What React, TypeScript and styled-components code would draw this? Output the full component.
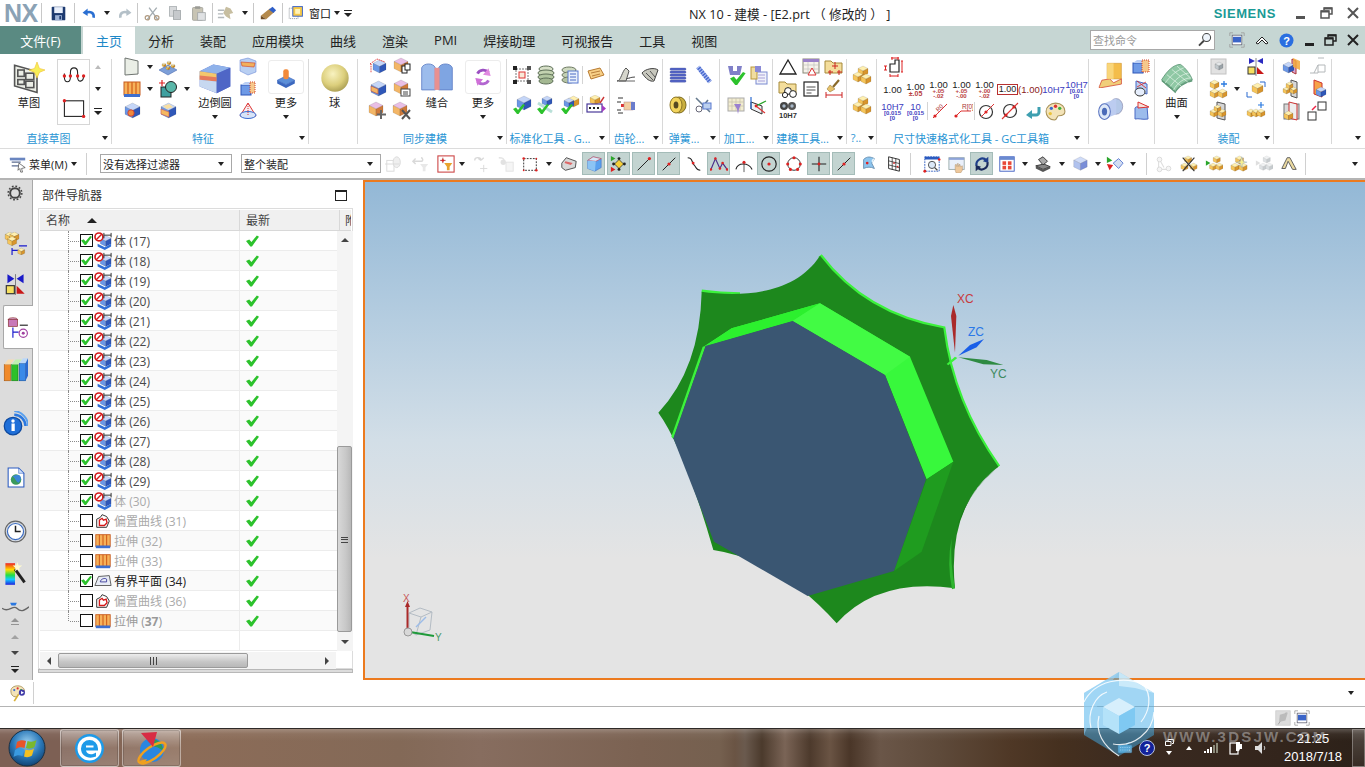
import React from 'react';
import styled, { createGlobalStyle } from 'styled-components';

const FONT = `"Open Sans","Noto Sans CJK SC","Liberation Sans",sans-serif`;

const Global = createGlobalStyle`
  html, body { margin: 0; padding: 0; background: #fff; }
  body { font-family: ${FONT}; font-size: 12px; color: #222; overflow: hidden; }
  * { box-sizing: border-box; }
`;

type C3 = [string, string, string];
const GOLD: C3 = ['#fff0b0', '#f6c55a', '#d8952c'];
const BLUE: C3 = ['#c5d6f8', '#6b97e6', '#2f57b8'];
const PINK: C3 = ['#e9bfe6', '#f3b667', '#cf7a3a'];
const GRAY: C3 = ['#e4e8ea', '#c2c9cd', '#9aa3a8'];

const cube = (x: number, y: number, s: number, c: C3) => (
  <g stroke="#0004" strokeWidth=".4">
    <polygon points={`${x + s / 2},${y} ${x + s},${y + s / 4} ${x + s / 2},${y + s / 2} ${x},${y + s / 4}`} fill={c[0]} />
    <polygon points={`${x},${y + s / 4} ${x + s / 2},${y + s / 2} ${x + s / 2},${y + s} ${x},${y + (3 * s) / 4}`} fill={c[1]} />
    <polygon points={`${x + s},${y + s / 4} ${x + s / 2},${y + s / 2} ${x + s / 2},${y + s} ${x + s},${y + (3 * s) / 4}`} fill={c[2]} />
  </g>
);
const tick = (x: number, y: number, k = 1) => (
  <polygon transform={`translate(${x} ${y}) scale(${k})`} points="0,5 3,3.5 5,6 10,0 12,1 5.5,10 4,10" fill="#2cc22c" />
);
const dot = (x: number, y: number, r = 1.4, c = '#d22') => <circle cx={x} cy={y} r={r} fill={c} />;
const ln = (d: string, c = '#222', w = 1) => <path d={d} fill="none" stroke={c} strokeWidth={w} />;

const ICONS: Record<string, React.ReactNode> = {
  save: <g><rect x="2" y="2" width="16" height="16" rx="1" fill="#1d3a70" /><rect x="5" y="2.5" width="10" height="7" fill="#e9effb" /><rect x="6" y="12" width="8" height="6" fill="#9fb4d8" /><rect x="11" y="13" width="2" height="4" fill="#1d3a70" /></g>,
  undo: <g>{ln('M16 15c1-6-4-8-9-6', '#2a6fd2', 3)}<polygon points="3,9 9,4 9,13" fill="#2a6fd2" /></g>,
  redo: <g transform="matrix(-1 0 0 1 20 0)">{ln('M16 15c1-6-4-8-9-6', '#b4c0c8', 3)}<polygon points="3,9 9,4 9,13" fill="#b4c0c8" /></g>,
  cut: <g>{ln('M4 17L15 3M16 17L6 3', '#a5adb2', 1.6)}<circle cx="4" cy="15" r="2.6" fill="none" stroke="#b09a80" strokeWidth="1.4" /><circle cx="15" cy="15" r="2.6" fill="none" stroke="#b09a80" strokeWidth="1.4" /></g>,
  copy: <g><rect x="3" y="2" width="9" height="12" fill="#d7d9db" stroke="#a8adb0" /><rect x="8" y="7" width="9" height="11" fill="#c6c9cc" stroke="#a0a5a8" /></g>,
  paste: <g><rect x="3" y="3" width="12" height="15" rx="1" fill="#c8c4b4" stroke="#a0a09a" /><rect x="6" y="1.5" width="6" height="3" fill="#9a9a94" /><rect x="9" y="9" width="9" height="9" fill="#dfe1e3" stroke="#a5a8aa" /></g>,
  snap: <g>{ln('M1 7h7M1 11h6M1 15h7', '#b4b9bc', 1.6)}<polygon points="10,3 15,5 18,10 14,11 15,17 10,14 7,10" fill="#c7bea0" /></g>,
  pen: <g><polygon points="2,13 12,5 17,9 8,17" fill="#b58a4c" /><polygon points="11,6 15,3 19,7 16,10" fill="#2f5fc8" /><polygon points="2,13 8,17 2,17" fill="#6e4a22" /></g>,
  win: <g><rect x="1.5" y="4" width="11" height="13" fill="#fff" stroke="#8a9098" strokeDasharray="1.5 1" /><rect x="6" y="2" width="12" height="12" fill="#f7c948" stroke="#3a63c8" strokeWidth="1.2" /><rect x="9" y="5" width="6" height="6" fill="#fff3b8" /></g>,
  sheet: <g><polygon points="3,1 16,4 16,17 3,18" fill="#eaeee6" stroke="#6e7470" /></g>,
  bumps: <g><polygon points="1,13 10,8 19,13 10,18" fill="#7d9fd8" stroke="#3e5ea8" strokeWidth=".5" />{cube(4, 6, 4, GOLD)}{cube(9, 4, 4, GOLD)}{cube(13, 7, 4, GOLD)}{cube(8, 9, 4, GOLD)}</g>,
  extrude: <g><rect x="2" y="3" width="16" height="13" fill="#f6b25a" stroke="#c65a1e" /><path d="M6 3v13M10 3v13M14 3v13" stroke="#d4641f" strokeWidth="1.3" /><rect x="2" y="15" width="16" height="3" fill="#3d6fd0" /></g>,
  bool: <g>{ln('M4 1v6M1 4h6', '#d22', 1.2)}<rect x="3" y="8" width="10" height="10" fill="#3fa0a0" stroke="#222" /><circle cx="13" cy="8" r="5.5" fill="#5ab7a9" stroke="#222" /></g>,
  hole: <g>{cube(3, 2, 15, BLUE)}<circle cx="9" cy="12" r="3.2" fill="#f08a3c" stroke="#c33" strokeWidth=".8" /></g>,
  pocket: <g>{cube(3, 2, 15, BLUE)}<polygon points="3,8 11,11 11,16 3,13" fill="#f5b860" stroke="#c55" strokeWidth=".6" /><polygon points="5,5 11,3 15,6 9,8" fill="#f9dfa0" /></g>,
  blend: <g><polygon points="1,6 9,2 19,4 19,15 11,19 1,15" fill="#5d72cf" /><polygon points="1,6 9,2 19,4 11,7.5" fill="#8fb2ea" /><polygon points="1,6 11,7.5 11,12 1,11" fill="#f3c76c" /><polygon points="1,8.5 11,9.5 11,12 1,11" fill="#e57a5c" /><polygon points="1,11 11,12 11,19 1,15" fill="#c7d8f0" /><polygon points="11,7.5 19,4 19,15 11,19" fill="#4f66c6" /></g>,
  chamfer: <g><polygon points="2,3 10,1 18,4 18,15 10,18 2,14" fill="#b9cff2" stroke="#5a7ad0" strokeWidth=".5" /><polygon points="3,5 17,6 16,10 4,9" fill="#f2b05c" stroke="#d0523a" strokeWidth=".7" /></g>,
  cubeDash: <g><rect x="3" y="6" width="10" height="10" fill="#6e9ae6" stroke="#2f57b8" /><polygon points="3,6 7,3 17,3 13,6" fill="#bcd0f4" /><rect x="12" y="3" width="5" height="11" fill="#f6c88c" stroke="#d2452f" strokeDasharray="1 1" /></g>,
  cone: <g><polygon points="10,2 18,15 2,15" fill="#f7eef0" stroke="#d33" /><ellipse cx="10" cy="14" rx="8" ry="3.5" fill="#d7e4f8" stroke="#3a6ad0" /><path d="M10 3v12" stroke="#d33" strokeDasharray="1 1" /></g>,
  more1: <g><polygon points="2,13 10,9 18,13 10,17" fill="#5b8fd8" stroke="#2f57b8" strokeWidth=".5" /><polygon points="2,13 10,17 18,13 18,16 10,20 2,16" fill="#3b68bf" /><rect x="7.5" y="3" width="5" height="9" rx="2" fill="#f28a3a" /></g>,
  morph: <g><path d="M15 6a6 6 0 0 0-10 1" fill="none" stroke="#9b4fc2" strokeWidth="2.6" /><polygon points="15,2 17,9 10,8" fill="#e08ae0" /><path d="M5 14a6 6 0 0 0 10-1" fill="none" stroke="#b266d0" strokeWidth="2.6" /><polygon points="5,18 3,11 10,12" fill="#d070d8" /></g>,
  syncA: <g>{cube(5, 3, 13, BLUE)}<path d="M2 7l7-5 8 3" fill="none" stroke="#d22" strokeDasharray="1.2 1" /><path d="M3 7v9" stroke="#d22" strokeDasharray="1.2 1" /></g>,
  syncB: <g>{cube(2, 1, 14, PINK)}<rect x="10" y="9" width="5" height="7" fill="#fff" stroke="#222" /><rect x="13" y="7" width="5" height="6" fill="#fff" stroke="#222" /></g>,
  syncC: <g>{cube(3, 2, 15, BLUE)}<polygon points="3,7 10,10 10,15 3,12" fill="#f3b667" stroke="#a33" strokeWidth=".5" /></g>,
  syncD: <g>{cube(2, 1, 14, PINK)}<rect x="9" y="10" width="9" height="7" fill="#fff" stroke="#444" /><path d="M11 13h5M11 15h5" stroke="#444" /></g>,
  syncE: <g>{cube(1, 1, 14, PINK)}{ln('M13 9v9M9 13.5h9', '#666', 2)}</g>,
  syncF: <g>{cube(1, 1, 14, PINK)}{ln('M10 9l8 9M18 9l-8 9', '#555', 2)}</g>,
  sew: <g><path d="M1 17V4c1-3 7-3 8 0v13z" fill="#9cbcec" stroke="#5f80c6" strokeWidth=".5" /><path d="M11 17V4c1-3 7-3 8 0v13z" fill="#7fa5e2" stroke="#5f80c6" strokeWidth=".5" /><rect x="8.5" y="4" width="3" height="13" fill="#e89090" /></g>,
  stdA: <g><rect x="4" y="4" width="12" height="12" fill="none" stroke="#777" strokeDasharray="2 1" /><rect x="7" y="7" width="6" height="6" fill="#f9e9d8" stroke="#d33" /><rect x="1" y="1" width="4" height="4" fill="#222" /><rect x="15" y="1" width="4" height="4" fill="#555" /><rect x="1" y="15" width="4" height="4" fill="#222" /><rect x="15" y="15" width="4" height="4" fill="#555" /></g>,
  stack: <g><ellipse cx="10" cy="4" rx="7" ry="3" fill="#d7e0c8" stroke="#5e7058" /><ellipse cx="10" cy="8" rx="8" ry="3" fill="#c3d2b0" stroke="#5e7058" /><ellipse cx="10" cy="12" rx="8" ry="3" fill="#b2c6a0" stroke="#5e7058" /><ellipse cx="10" cy="16" rx="7" ry="3" fill="#a4b892" stroke="#5e7058" /></g>,
  stackList: <g><ellipse cx="9" cy="5" rx="7" ry="3" fill="#cfdac0" stroke="#6e7a62" /><ellipse cx="9" cy="10" rx="7" ry="3" fill="#c3d0b4" stroke="#6e7a62" /><ellipse cx="9" cy="15" rx="7" ry="3" fill="#b5c4a4" stroke="#6e7a62" /><rect x="8" y="6" width="10" height="12" fill="#e8f0fb" stroke="#5a7ad0" /><path d="M10 9h6M10 12h6M10 15h6" stroke="#4a6ac4" /></g>,
  tag: <g><polygon points="2,6 14,3 18,10 5,14" fill="#f7cf86" stroke="#b87a30" /><path d="M5 8l9-2M6 11l8-2" stroke="#a86a28" strokeWidth=".8" /></g>,
  okCube: <g>{cube(5, 1, 14, BLUE)}{tick(1, 9)}</g>,
  okTool: <g>{cube(6, 1, 10, BLUE)}<path d="M2 8l14 9" stroke="#b9e0d8" strokeWidth="3" />{tick(1, 9)}</g>,
  okBox: <g>{cube(8, 1, 11, GOLD)}{cube(4, 3, 10, BLUE)}{tick(1, 9)}</g>,
  kit: <g>{cube(4, 0, 10, GOLD)}<rect x="1" y="9" width="15" height="8" fill="#fff" stroke="#4a3a9a" strokeWidth="1.2" /><path d="M3 13h2M7 13h2M11 13h2" stroke="#222" strokeWidth="2" /><polygon points="16,10 20,13.5 16,17" fill="#a63ac2" /><path d="M14 8l4-6" stroke="#c33" strokeWidth="1.4" /></g>,
  gearA: <g><path d="M1 16c4 0 5-10 9-13l3 3-3 10z" fill="#d6d6cc" stroke="#555" /><path d="M10 14c3-1 6-2 9-2" stroke="#555" /><path d="M3 16h16" stroke="#666" /></g>,
  gearB: <g><path d="M2 8c3-4 12-6 16-3l-4 11c-4 1-8-2-12-8z" fill="#c7c7bd" stroke="#444" /><path d="M6 8l7 7M10 6l5 6" stroke="#555" /></g>,
  hand: <g>{ln('M2 3h5M1 7h4M1 15h4M2 18h5', '#333', 1)}<rect x="5" y="9" width="3" height="3" fill="#d33" /><rect x="8" y="7" width="9" height="8" fill="#f2cfa2" stroke="#a88" strokeWidth=".5" /><rect x="15" y="7" width="4" height="8" fill="#6a7ccc" /></g>,
  spring: <g>{[3, 6, 9, 12, 15].map(y => <rect key={y} x="2" y={y} width="16" height="2.2" rx="1" fill="#5566c8" stroke="#33408c" strokeWidth=".3" />)}</g>,
  coil: <g><path d="M5 2l12 15" stroke="#4a6ad0" strokeWidth="4.4" /><path d="M5 2l12 15" stroke="#b8c8f4" strokeWidth="4.4" strokeDasharray="1 1.6" /></g>,
  ring: <g><ellipse cx="11" cy="10" rx="7" ry="8" fill="#c9ae3e" stroke="#7e6c20" /><ellipse cx="8" cy="10" rx="6" ry="8" fill="#f2d45c" stroke="#8a7426" /><ellipse cx="8" cy="10" rx="2.4" ry="3.6" fill="#554820" /></g>,
  clamp: <g>{ln('M3 3l14 14M15 5l-9 11', '#667a8e', 1.6)}<ellipse cx="6" cy="14" rx="3" ry="3" fill="#fff" stroke="#667" /><rect x="10" y="8" width="8" height="6" fill="#bcd0ee" stroke="#5a7ad0" /></g>,
  machOk: <g><polygon points="2,1 7,1 7,6 11,6 11,1 16,1 14,10 4,10" fill="#8080c8" />{tick(4, 7, 1.3)}</g>,
  machList: <g><rect x="8" y="7" width="11" height="12" fill="#f0f2fa" stroke="#7a8ad0" /><path d="M10 10h7M10 13h7M10 16h7" stroke="#a8a0d8" /><rect x="3" y="2" width="6" height="12" fill="#f0dda0" stroke="#b9983a" /><polygon points="7,1 13,1 13,7 7,7" fill="#8a8ad6" /></g>,
  gridPin: <g><rect x="2" y="3" width="16" height="13" fill="#f2ecd0" stroke="#aaa" /><path d="M2 7h16M2 11h16M6 3v13M10 3v13M14 3v13" stroke="#c6c2aa" strokeWidth=".7" /><polygon points="8,9 15,9 13,14 12,19 11,14" fill="#9a80d0" /></g>,
  axis: <g><polygon points="3,7 14,11 14,19 3,14" fill="#eef2f6" stroke="#333" />{ln('M3 2v12', '#2a6ad0', 1.2)}{ln('M8 11l10-5', '#2aa52a', 1.2)}{ln('M8 11l9 7', '#d33', 1.2)}{dot(8, 11)}</g>,
  tri: <polygon points="10,3 18,17 2,17" fill="none" stroke="#222" strokeWidth="1.3" />,
  tableTri: <g><rect x="2" y="2" width="16" height="14" fill="#f6f2ea" stroke="#887" /><rect x="2" y="2" width="16" height="3" fill="#9a80c8" /><path d="M2 8h16M2 12h16M7 5v11M13 5v11" stroke="#bbb" strokeWidth=".6" /><polygon points="11,11 15,18 7,18" fill="#fff" stroke="#d33" /></g>,
  folderPlus: <g><polygon points="1,4 7,4 9,6 18,6 18,16 1,16" fill="#f4de9c" stroke="#a68a3a" />{ln('M11 5v7M8 9h6', '#c22', 1)}{ln('M6 13v5M4 15h5M15 13v5M13 15h5', '#c22', 1)}</g>,
  folderOO: <g><polygon points="1,3 7,3 9,5 18,5 18,14 1,14" fill="#f4de9c" stroke="#a68a3a" /><circle cx="10" cy="12" r="3.4" fill="#fff" stroke="#222" /><circle cx="15" cy="15" r="3.4" fill="#fff" stroke="#222" /><circle cx="7" cy="16" r="2.6" fill="#fff" stroke="#222" /></g>,
  noteBox: <g><rect x="3" y="3" width="14" height="14" fill="#fff" stroke="#222" strokeWidth="1.2" />{ln('M5.5 8h9M5.5 11h9M5.5 14h5', '#222', .8)}</g>,
  broomDim: <g><path d="M15 1l-6 7" stroke="#8a6a2a" strokeWidth="2.2" /><polygon points="6,6 11,10 6,13 3,10" fill="#e6c26a" stroke="#8a6a2a" strokeWidth=".5" />{ln('M2 13v6M18 13v6M2 16h16', '#c22', 1)}</g>,
  bino: <g><circle cx="6" cy="5" r="4" fill="#444" /><circle cx="14" cy="5" r="4" fill="#555" /><circle cx="6" cy="5" r="1.7" fill="#a8b8c8" /><circle cx="14" cy="5" r="1.7" fill="#a8b8c8" /><text x="10" y="17" fontSize="7.500" fontWeight="bold" textAnchor="middle" fill="#333" fontFamily="Liberation Sans">10H7</text></g>,
  goldCubes: <g>{cube(6, 1, 10, GOLD)}{cube(1, 7, 10, GOLD)}{cube(9, 9, 10, GOLD)}</g>,
  dimStep: <g>{ln('M7 15V7h5V3h4v12z', '#222', 1.2)}{ln('M8 1h8M9 0v3M15 0v3', '#d22', 1)}{ln('M7 19h8M7 17v3M15 17v3', '#d22', 1)}{ln('M18 4h2M18 15h2M19 4v11', '#d22', 1)}{ln('M1 9h3M1 13h3M2.5 9v4', '#d22', 1)}</g>,
  dimSlash: <g>{ln('M3 17L17 3', '#d33', 1)}<text x="7" y="10" fontSize="6" fill="#a33" fontFamily="Liberation Sans" transform="rotate(-45 9 9)">R0</text>{dot(5, 15, 1.6)}</g>,
  dimRad: <g>{ln('M2 16l6-6h10', '#d33', 1)}<text x="9" y="8" fontSize="6.5" fill="#a33" fontFamily="Liberation Sans">R[0]</text>{dot(3, 15, 1.6)}</g>,
  dia1: <g><circle cx="9" cy="11" r="6.5" fill="#fff" stroke="#333" strokeWidth="1.2" />{ln('M4 16L17 3', '#d33', 1)}{dot(9, 11, 1.6)}</g>,
  dia2: <g><ellipse cx="10" cy="10" rx="6.5" ry="6.5" fill="none" stroke="#333" strokeWidth="1.2" />{ln('M2 18L18 2', '#d33', 1.1)}{dot(6, 14, 1.6)}{dot(14, 6, 1.6)}</g>,
  backArrow: <g><path d="M16 6v5a3 3 0 0 1-3 3H8" fill="none" stroke="#3e9fb0" strokeWidth="3" /><polygon points="9,9 3,14 9,18" fill="#3e9fb0" /></g>,
  palette: <g><path d="M10 2c6 0 9 4 9 8s-4 4-6 4-1 4-4 4C4 18 1 14 1 10s4-8 9-8z" fill="#f3e3b8" stroke="#a8925a" /><circle cx="6" cy="7" r="1.6" fill="#3a6ad0" /><circle cx="10" cy="5" r="1.6" fill="#d33" /><circle cx="14" cy="7" r="1.6" fill="#3bb03b" /><circle cx="5" cy="12" r="1.6" fill="#eac23a" /></g>,
  bigPipeBox: <g><polygon points="7,1 18,1 18,13 7,13" fill="#f4bd4a" stroke="#c88a20" strokeWidth=".4" /><polygon points="1,19 3,14 9,13 12,16 18,13 18,17 1,20" fill="#f0cf7a" stroke="#d2452f" strokeWidth=".6" /><polygon points="7,1 12,1 12,13 7,13" fill="#f9d67a" /></g>,
  smallDashCube: <g><rect x="2" y="6" width="10" height="10" fill="#6e9ae6" stroke="#2f57b8" /><polygon points="2,6 6,3 16,3 12,6" fill="#bcd0f4" /><rect x="11" y="3" width="7" height="12" fill="#f6c88c" stroke="#d2452f" strokeDasharray="1 1" /></g>,
  flagA: <g><polygon points="5,2 16,5 16,15 5,12" fill="#b9cff2" stroke="#4a6ac4" /><path d="M6 2l9 7M6 8l9-5" stroke="#d22" strokeWidth=".8" /><ellipse cx="9" cy="13" rx="5" ry="4" fill="#e6eefc" stroke="#333" /></g>,
  flagB: <g><path d="M4 18V7c2-3 4 1 12-2l1 13c-6 1-9-1-13 0z" fill="#9cbcec" stroke="#4a6ac4" /><polygon points="7,1 18,6 7,7" fill="#f6e0d8" stroke="#d33" /></g>,
  pipe: <g><ellipse cx="14" cy="8" rx="5" ry="6" fill="#b4c8e8" stroke="#88a" strokeWidth=".5" /><polygon points="14,2 4,6 4,18 14,14" fill="#bcccf0" /><ellipse cx="5" cy="12" rx="4.5" ry="6" fill="#dde8f8" stroke="#5a74c0" strokeWidth=".8" /><ellipse cx="5" cy="12" rx="2" ry="3" fill="#4a6ab8" /></g>,
  surface: <g><path d="M1 11C4 6 8 2 12 2c3 2 6 6 7 9-4 1-8 3-10 7-3-2-6-4-8-7z" fill="#8fc8a4" stroke="#5d9676" strokeWidth=".5" /><path d="M1 11c3 2 6 4 8 7 2-4 6-6 10-7v1c-4 1-8 3-10 7-3-3-5-5-8-7z" fill="#5f9a78" /><path d="M4 8l10 8M7 5l10 8M10 3l8 7M3 13c3-4 6-7 11-9M6 15c3-4 6-7 11-8M8 17c2-4 6-7 10-7" stroke="#e6f4ea" strokeWidth=".4" fill="none" /></g>,
  asmGhost: <g><rect x="2" y="2" width="15" height="15" fill="#e2e2e2" stroke="#c2c2c2" />{cube(6, 5, 8, GRAY)}</g>,
  mirrorAsm: <g>{ln('M10 1v18', '#888', 1)}<polygon points="3,1 9,4 3,7" fill="#2a2ac0" /><polygon points="17,1 11,4 17,7" fill="#2a2ac0" /><rect x="2" y="10" width="7" height="7" fill="#f6e060" stroke="#333" /><polygon points="11,10 18,17 11,17" fill="#c81818" /></g>,
  asmAdd: <g>{cube(1, 1, 9, GOLD)}{cube(1, 10, 9, GOLD)}{cube(9, 10, 9, GOLD)}{ln('M15 2v6M12 5h6', '#2a7ae0', 1.3)}</g>,
  asmMove: <g>{ln('M1 13v5h5M14 3h5v5', '#2a6ad0', 1)}{cube(6, 4, 11, GOLD)}</g>,
  asmPlane: <g><polygon points="8,1 16,3 16,19 8,17" fill="#d6d6d6" stroke="#555" />{cube(1, 8, 8, GOLD)}{cube(9, 8, 8, GOLD)}{cube(5, 4, 7, GOLD)}</g>,
  asmRow: <g>{cube(1, 8, 8, GOLD)}{cube(6, 8, 8, GOLD)}{cube(11, 8, 8, GOLD)}{ln('M15 1v6M12 4h6', '#2a7ae0', 1.2)}</g>,
  asmCut: <g><polygon points="10,2 14,4 14,17 10,15" fill="#d8a8d8" stroke="#a33" />{cube(1, 5, 11, BLUE)}<polygon points="11,1 18,4 18,13 11,10" fill="#f5a83a" opacity=".85" /></g>,
  ghostPart: <g>{ln('M3 16h8v-8h7v7h-7M7 16l4-8M11 1h6', '#b4b8ba', 1)}</g>,
  planeCube: <g><polygon points="9,1 15,3 15,19 9,17" fill="#d8d8d8" stroke="#555" />{cube(1, 8, 7, GOLD)}{cube(8, 8, 7, GOLD)}{cube(4, 3, 7, GOLD)}</g>,
  redPlaneCube: <g><polygon points="7,1 15,4 15,18 7,15" fill="#f7a248" stroke="#c33" />{cube(9, 8, 10, BLUE)}</g>,
  framePart: <g><rect x="2" y="3" width="15" height="15" fill="#d8d8d8" stroke="#777" /><polygon points="7,1 15,3 15,19 7,17" fill="#eee" stroke="#c33" />{cube(2, 10, 9, GOLD)}</g>,
  boxesMove: <g><rect x="11" y="1" width="8" height="8" fill="#fff" stroke="#333" /><rect x="1" y="11" width="8" height="8" fill="#fff" stroke="#333" /><path d="M5 9l4-4" stroke="#e24" strokeWidth="1.4" /></g>,
  menuI: <g><path d="M1 4h15M3 8h10M3 12h8" stroke="#5a6b90" strokeWidth="1.4" /><rect x="1" y="3" width="17" height="3" fill="#6a86c0" /><polygon points="11,9 18,14 14,15 15,19 13,19 12,15 10,17" fill="#fff" stroke="#333" strokeWidth=".7" /></g>,
  selA: <g><rect x="2" y="6" width="8" height="12" fill="none" stroke="#bbb" /><ellipse cx="13" cy="8" rx="4" ry="6" fill="#e2e2e2" stroke="#bbb" />{ln('M0 10h16', '#bbb', 1)}</g>,
  selB: <g>{ln('M2 7h8c3 0 2-4 0-4M4 4L1 7l3 3', '#bbb', 1.6)}<polygon points="9,10 18,10 15,14 15,18 12,18 12,14" fill="#d6d6d6" /></g>,
  selFilter: <g><rect x="1" y="1" width="18" height="18" fill="#fff" stroke="#c44" strokeWidth="1.2" />{ln('M6.5 3v6M3.5 6h6', '#a33', 1)}{dot(6.5, 6, 1.3)}<polygon points="8,9 17,9 14,13 14,17 11,17 11,13" fill="#e8a32e" /></g>,
  selC: <g>{ln('M3 6c0-4 7-4 7 0M10 6l3-3M10 6l-3-2', '#bbb', 1.4)}{ln('M13 11v8M9 15h8', '#bbb', 1)}</g>,
  selD: <g>{ln('M2 3c3 0 6 0 6 4', '#ccc', 1.5)}<rect x="10" y="8" width="8" height="10" fill="#eee" stroke="#ccc" /><circle cx="7" cy="8" r="3" fill="#ccc" /></g>,
  dashRect: <g><rect x="3" y="4" width="14" height="13" fill="none" stroke="#222" strokeDasharray="2 1.4" />{dot(3, 4)}{dot(17, 17)}{dot(17, 4, 1)}{dot(3, 17, 1)}</g>,
  plate: <g><polygon points="2,9 7,3 18,7 17,14 6,17 2,14" fill="#d8d8d8" stroke="#444" /><polygon points="6,7 14,9 12,11 5,9" fill="#d66" /></g>,
  cubeSel: <g><polygon points="3,6 9,2 18,4 18,14 11,18 3,15" fill="#5aa0ee" stroke="#2f57b8" strokeWidth=".5" /><polygon points="3,6 9,2 18,4 12,7" fill="#d6e8fa" stroke="#d33" strokeWidth=".6" /><polygon points="3,6 12,7 11,18 3,15" fill="#8cc4f4" /></g>,
  snapDots: <g><polygon points="10,5 15,10 10,15 5,10" fill="#f6d03a" stroke="#222" strokeWidth=".8" />{dot(10, 4, 1.6, '#222')}{dot(10, 16, 1.6, '#222')}{dot(4, 10, 1.6, '#222')}{dot(16, 10, 1.6, '#222')}<polygon points="1,1 6,4 1,7" fill="#2aa52a" /><polygon points="1,13 6,16 1,19" fill="#d22" /></g>,
  lineEnd: <g>{ln('M3 17L16 4', '#222', 1.1)}{dot(16, 4, 1.8)}</g>,
  lineMid: <g>{ln('M3 17L17 3', '#222', 1.1)}{dot(10, 10, 1.8)}</g>,
  scurve: <g>{ln('M3 3c6 0 4 5 7 8s2 6 7 6', '#222', 1.2)}{dot(9, 9, 1.6)}</g>,
  poly: <g>{ln('M1 16L6 4l5 11 3-6 5 7', '#4a2a88', 1.3)}{dot(6, 4)}{dot(11, 15)}{dot(14, 9)}{dot(1, 16)}{dot(19, 16)}</g>,
  arcC: <g>{ln('M1 16c2-8 14-8 18 0', '#222', 1.2)}{ln('M10 8v11', '#222', .8)}{dot(10, 8, 1.7)}</g>,
  circC: <g><circle cx="10" cy="10" r="8" fill="none" stroke="#222" strokeWidth="1.3" />{dot(10, 10, 1.8)}</g>,
  circP: <g><circle cx="10" cy="10" r="7" fill="none" stroke="#222" />{dot(10, 3, 1.7)}{dot(3, 10, 1.7)}{dot(17, 10, 1.7)}{dot(6, 16, 1.7)}{dot(14, 16, 1.7)}</g>,
  cross: <g>{ln('M10 2v16M2 10h16', '#222', 1.2)}{dot(10, 10, 1.6)}</g>,
  surfPt: <g><path d="M4 15V5c4-4 8-3 12-1l-3 5 3 6c-4-2-8-2-12 0z" fill="#8cc4ee" stroke="#6a90b0" /><path d="M14 9c-2-2-1-5 2-5" fill="#e8f4fa" />{dot(8, 9, 1.5)}</g>,
  gridPt: <g><polygon points="4,2 16,5 16,18 4,15" fill="#fff" stroke="#222" /><path d="M8 3v13M12 4v13M4 6.5l12 3M4 11l12 3" stroke="#222" strokeWidth=".8" />{dot(10, 9, 1)}{dot(14, 13, 1)}</g>,
  zoomFit: <g><rect x="2" y="2" width="16" height="16" fill="#fff" stroke="#2a5ac0" strokeDasharray="2 1" /><rect x="2" y="2" width="16" height="3" fill="#2a5ac0" /><circle cx="10" cy="11" r="4" fill="#dbe8f8" stroke="#444" />{ln('M13 14l3 3', '#444', 1.4)}{dot(2, 18, 1.6)}{dot(18, 5, 1.4)}</g>,
  pan: <g><rect x="1" y="3" width="17" height="13" fill="#eaf0fb" stroke="#9aa" /><rect x="1" y="3" width="17" height="2.4" fill="#8ea4d8" /><path d="M8 17v-6l1-1 1 3 1-4 1 4 1-3 1 3 2-1v5l-2 3h-5z" fill="#eec89c" stroke="#a88a6a" strokeWidth=".5" /></g>,
  rotate: <g><path d="M4 12a6.5 6.5 0 0 1 11-6" fill="none" stroke="#1f3f8c" strokeWidth="2.4" /><polygon points="17,2 17,9 11,7" fill="#1f3f8c" /><path d="M16 8a6.5 6.5 0 0 1-11 6" fill="none" stroke="#1a2a5c" strokeWidth="2.4" /><polygon points="3,18 3,11 9,13" fill="#1a2a5c" /></g>,
  view: <g><rect x="2" y="2" width="16" height="16" fill="#fff" stroke="#3a5ac0" /><rect x="2" y="2" width="16" height="3.4" fill="#6a8ad0" />{[[5, 7], [11, 7], [5, 12], [11, 12]].map(([x, y]) => <rect key={x * y} x={x} y={y} width="4" height="4" fill="#e84838" />)}</g>,
  shade: <g><polygon points="2,12 10,16 18,13 11,10" fill="#888" stroke="#333" /><polygon points="2,12 10,16 18,13 18,15 10,19 2,15" fill="#555" /><polygon points="5,5 10,2 15,7 10,11" fill="#aaa" stroke="#333" /></g>,
  blockB: <g>{cube(3, 2, 15, ['#d0dcf8', '#b0c2ee', '#7a8ed8'])}</g>,
  triColor: <g><polygon points="8,9 14,4 19,9 14,15" fill="#d2ddf2" stroke="#5a7ad0" /><polygon points="1,2 7,6 1,9" fill="#2aa52a" /><polygon points="1,10 8,11 4,17" fill="#d22" /></g>,
  asmA: <g>{ln('M5 5l5 9M4 6v9M6 16h8', '#c4c4c4', 1.2)}<circle cx="5" cy="5" r="2.6" fill="#eee" stroke="#bbb" /><circle cx="5" cy="16" r="2.6" fill="#eee" stroke="#bbb" /><circle cx="15" cy="15" r="2.6" fill="#eee" stroke="#bbb" /></g>,
  asmB: <g>{cube(5, 1, 8, GOLD)}{cube(1, 9, 8, GOLD)}{cube(11, 9, 8, GOLD)}{ln('M3 3l13 15M16 3L3 18', '#333', 1.2)}</g>,
  asmC: <g><polygon points="1,6 6,9 1,12" fill="#2aa52a" />{cube(9, 1, 8, GOLD)}{cube(5, 9, 8, GOLD)}{cube(12, 9, 8, GOLD)}</g>,
  asmD: <g>{cube(6, 1, 9, GOLD)}{cube(1, 9, 9, GOLD)}{cube(10, 9, 9, GOLD)}<polygon points="13,2 14.5,7 19,8 14.5,9 13,14 11.5,9 7,8 11.5,7" fill="#f6ee90" stroke="#7a9ad0" strokeWidth=".4" /></g>,
  asmE: <g><polygon points="1,6 6,9 1,12" fill="#c6c6c6" />{cube(9, 1, 8, GRAY)}{cube(5, 9, 8, GRAY)}{cube(12, 9, 8, GRAY)}</g>,
  wedge: <g><path d="M2 15L8 3h3l7 13h-4l-5-9-3 8z" fill="#ead9a0" stroke="#555" /></g>,
  statusPal: <g><path d="M9 1c5 0 8 3 8 6s-4 3-6 3-1 4-4 4C3 14 1 11 1 7s4-6 8-6z" fill="#f3e3b8" stroke="#a8925a" /><circle cx="5" cy="6" r="1.3" fill="#3a6ad0" /><circle cx="9" cy="4" r="1.3" fill="#d33" /><circle cx="13" cy="6" r="1.3" fill="#3bb03b" />{ln('M5 19l5-8', '#d8b23a', 2)}<circle cx="14" cy="9" r="3.6" fill="#3f3aa8" /><polygon points="13,7 16.5,9 13,11" fill="#fff" /></g>,
  flagGray: <g><rect x="1" y="1" width="18" height="18" fill="#dcdcdc" stroke="#ccc" />{ln('M4 18L14 3', '#9a9a9a', 1)}<path d="M6 6l10-3-3 10-8 2z" fill="#bbb" /></g>,
  frameWin: <g><path d="M1 5V1h4M15 1h4v4M19 15v4h-4M5 19H1v-4" fill="none" stroke="#9a9a9a" /><rect x="4" y="4" width="12" height="12" fill="#fff" stroke="#667" /><rect x="5" y="6" width="10" height="7" fill="#3a64c8" /></g>,
  gear: <g><circle cx="10" cy="10" r="5.4" fill="none" stroke="#444" strokeWidth="2.2" /><circle cx="10" cy="10" r="7.6" fill="none" stroke="#444" strokeWidth="1.6" strokeDasharray="2 2" /></g>,
  railAsm: <g>{cube(1, 0, 8, GOLD)}{cube(5, 0, 8, GOLD)}{cube(3, 4, 8, GOLD)}{ln('M7 14v6M7 16h5M13 12h7', '#1a1acc', 1)}{cube(12, 14, 6, GOLD)}</g>,
  railCon: <g>{ln('M10 1v18', '#777', .8)}<polygon points="3,1 9,5 3,9" fill="#1a1ac8" /><polygon points="17,1 11,5 17,9" fill="#1a1ac8" /><rect x="2" y="11" width="7" height="7" fill="#f6e060" stroke="#333" /><polygon points="11,11 18,18 11,18" fill="#c81818" /></g>,
  railPart: <g><ellipse cx="6" cy="3" rx="4" ry="1.5" fill="#d8a0cc" stroke="#833" strokeWidth=".6" /><rect x="2" y="3" width="8" height="6" fill="#c878b8" stroke="#833" strokeWidth=".6" />{ln('M12 8h7', '#222', 1)}{ln('M6 10v9M6 14h5', '#1a1acc', 1)}<circle cx="15" cy="15" r="3.6" fill="none" stroke="#a040a0" /><circle cx="15" cy="15" r="1.3" fill="#a040a0" /></g>,
  railBooks: <g><rect x="1" y="6" width="5" height="13" fill="#f08a2a" stroke="#a85a10" strokeWidth=".5" /><rect x="7" y="6" width="5" height="13" fill="#2ec02a" stroke="#108010" strokeWidth=".5" /><rect x="13" y="5" width="5" height="14" fill="#3a8ae8" stroke="#1050a0" strokeWidth=".5" /><polygon points="1,6 4,2 9,2 6,6" fill="#f8dcb0" /><polygon points="7,6 10,2 15,2 12,6" fill="#c0f0b0" /><polygon points="13,5 16,1 20,1 18,5" fill="#bcd8f8" /><polygon points="18,5 20,1 20,15 18,19" fill="#2a6ad0" /></g>,
  railInfo: <g><circle cx="8" cy="12" r="7" fill="#1f6fd8" stroke="#0e4aa0" /><circle cx="8" cy="8" r="1.4" fill="#fff" /><rect x="6.8" y="10" width="2.6" height="6" fill="#fff" />{ln('M9 3a9 9 0 0 1 9 9', '#2a78e0', 2)}{ln('M9 0a12 12 0 0 1 11 12', '#5aa0ee', 1.6)}</g>,
  railPage: <g><polygon points="3,1 13,1 18,6 18,19 3,19" fill="#fff" stroke="#2a5ac0" /><polygon points="13,1 18,6 13,6" fill="#cfe0fa" stroke="#2a5ac0" strokeWidth=".5" /><circle cx="10.5" cy="12" r="5" fill="#3b9a5c" /><path d="M7 9c3 1 3 5 6 6 2-2 3-5 1-7-3-1-5 0-7 1z" fill="#3a86d8" /></g>,
  railClock: <g><circle cx="10" cy="10" r="9" fill="#d2d8e0" stroke="#666" /><circle cx="10" cy="10" r="7" fill="#fff" stroke="#3a6ac0" />{ln('M10 5v5h4.5', '#222', 1.3)}</g>,
  railColor: <g><defs><linearGradient id="spec" x1="0" x2="0" y1="0" y2="1"><stop offset="0" stopColor="#e22" /><stop offset=".3" stopColor="#fd0" /><stop offset=".55" stopColor="#2d4" /><stop offset=".75" stopColor="#1cf" /><stop offset="1" stopColor="#22d" /></linearGradient></defs><rect x="2" y="1" width="8" height="18" fill="url(#spec)" />{ln('M10 6l8 11', '#222', 2.4)}<polygon points="12,0 13,3 16,3 13.5,5 14,8 12,6 10,8 10.5,5 8,3 11,3" fill="#fffbd0" /></g>,
  railCurve: <g>{ln('M0 12c5 4 8-3 11 0s5 2 9-1', '#666', 1)}<polygon points="6,8 11,8 10,10 7,10" fill="#2a78e0" /></g>,
  uD: <polygon points="3,12 10,7 17,12" fill="#bbb" />,
  body: <g>{cube(7, 4, 12, BLUE)}<polygon points="4,13 12,17 19,13 19,16 12,20 4,16" fill="#2f6fd8" /><circle cx="5.5" cy="5.500" r="4.400" fill="#fff" stroke="#d41c1c" strokeWidth="1.800" />{ln('M2.500 8.500l6-6', '#d41c1c', 1.600)}{ln('M11 1v6M11 3.500h8M19 1v5', '#222', 1)}</g>,
  offset: <g><path d="M3 17V8l4-2 2-3 5 2 3 5-3 7z" fill="#fff" stroke="#222" strokeWidth="1" /><path d="M6 15V9l3-2 1.500 2 3-1 1 4-3 3z" fill="#fff" stroke="#d41c1c" strokeWidth="1.500" /></g>,
  plane: <g><polygon points="5,5 17,4 19,15 1,15" fill="#e8ecf6" stroke="#555" /><path d="M7 11c0-3 5-5 7-3v3z" fill="none" stroke="#3a3a9a" /></g>,
  sketch: <g><polygon points="1,2 15,6 15,19 1,15" fill="#eceee6" stroke="#555" /><rect x="3" y="5" width="4" height="4" fill="none" stroke="#555" /><rect x="8" y="7" width="5" height="4" fill="none" stroke="#555" /><rect x="3" y="11" width="4" height="3" fill="none" stroke="#555" /><rect x="8" y="12" width="5" height="4" fill="none" stroke="#555" /><polygon points="15,0 16.500,4 20,5 16.500,6.500 15,10 13.500,6.500 10,5 13.500,4" fill="#f7ee58" stroke="#f2c23a" strokeWidth=".4" /></g>,
  sketchWave: <g>{ln('M2 8v3c0 5 5 5 5 0V7c0-5 6-5 6 0v4c0 5 5 4 5-1', '#222', .9)}{dot(2, 10, 1.400)}{dot(7, 10, 1.400)}{dot(13, 10, 1.400)}{dot(18, 10, 1.400)}</g>,
  sketchRect: <g><rect x="2" y="4" width="16" height="13" fill="none" stroke="#222" strokeWidth=".9" />{dot(2, 4, 1.400)}{dot(18, 17, 1.400)}</g>,
  sphere: <g><defs><radialGradient id="sph" cx=".42" cy=".35" r=".7"><stop offset="0" stopColor="#f8f2c0" /><stop offset=".6" stopColor="#dccf7c" /><stop offset="1" stopColor="#a69a50" /></radialGradient></defs><circle cx="10" cy="10" r="7.600" fill="url(#sph)" /></g>,
  magnify: <g><circle cx="12" cy="7" r="5" fill="#eef4fb" stroke="#444" strokeWidth="1.300" />{ln('M8.500 11L2.500 17', '#444', 2.400)}</g>,
};

const Svg = styled.svg<{ $fade?: boolean }>`
  display: block;
  flex: none;
  opacity: ${p => (p.$fade ? 0.55 : 1)};
`;
const Ico = ({ k, s = 20, fade }: { k: string; s?: number; fade?: boolean }) => (
  <Svg $fade={fade} width={s} height={s} viewBox="0 0 20 20">{ICONS[k]}</Svg>
);

/* app frame */
const Page = styled.div`
  width: 1365px;
  height: 767px;
  position: relative;
  overflow: hidden;
  display: flex;
  flex-direction: column;
  background: #fff;
`;

/* title bar */
const TitleBar = styled.div`
  height: 26px;
  display: flex;
  align-items: center;
  background: #fff;
`;
const QuickBar = styled.div`
  width: 689px;
  display: flex;
  align-items: center;
  padding-left: 4px;
`;
const Logo = styled.div`
  width: 37px;
  font: bold 25px/26px "Liberation Sans", sans-serif;
  color: #8ba2b5;
  letter-spacing: -0.5px;
`;
const QSep = styled.div`
  width: 1px;
  height: 20px;
  background: #c8c8c8;
  flex: none;
`;
const QBtn = styled.div<{ $w: number }>`
  width: ${p => p.$w}px;
  display: flex;
  justify-content: center;
  flex: none;
`;
const Caret = styled.span<{ $w?: number; $c?: string }>`
  width: ${p => p.$w ?? 12}px;
  height: 10px;
  flex: none;
  display: flex;
  align-items: center;
  justify-content: center;
  &::before {
    content: '';
    border-left: 3.5px solid transparent;
    border-right: 3.5px solid transparent;
    border-top: 4px solid ${p => p.$c ?? '#222'};
  }
`;
const WinLabel = styled.span`
  font-size: 11px;
  color: #111;
`;
const LineCaret = styled.span<{ $ml?: number }>`
  width: 8px;
  height: 7px;
  margin-left: ${p => p.$ml ?? 0}px;
  border-top: 1px solid #222;
  position: relative;
  &::after {
    content: '';
    position: absolute;
    left: 0;
    top: 2px;
    border-left: 4px solid transparent;
    border-right: 4px solid transparent;
    border-top: 4px solid #222;
  }
`;
const WinTitle = styled.div`
  font-size: 12.7px;
  color: #222;
  white-space: pre;
`;
const Siemens = styled.div`
  margin-left: auto;
  font: bold 13px "Liberation Sans", sans-serif;
  letter-spacing: .55px;
  color: #1a9a96;
  margin-right: 20px;
`;
const WinBtns = styled.div`
  width: 69px;
  display: flex;
  justify-content: space-between;
  align-items: center;
  padding-right: 6px;
  color: #444;
`;
const MinGlyph = styled.span<{ $c?: string }>`
  width: 9px;
  height: 11px;
  border-bottom: 3px solid ${p => p.$c ?? '#555'};
`;
const RestoreGlyph = ({ c = '#555' }: { c?: string }) => (
  <svg width="13" height="12" viewBox="0 0 13 12"><path d="M4 3V1h8v6h-3M1 4h8v7H1z" fill="none" stroke={c} strokeWidth="1.5" /><path d="M1 4.5h8M4 1.5h8" stroke={c} strokeWidth="2" /></svg>
);
const CloseGlyph = ({ c = '#555' }: { c?: string }) => (
  <svg width="12" height="12" viewBox="0 0 12 12"><path d="M1 1l10 10M11 1L1 11" stroke={c} strokeWidth="2" /></svg>
);

/* tabs */
const TabBar = styled.div`
  height: 28px;
  background: #c6d6d3;
  display: flex;
  align-items: stretch;
`;
const FileTab = styled.div`
  width: 81px;
  background: #5a8a82;
  color: #fff;
  font-size: 13px;
  display: flex;
  align-items: center;
  justify-content: center;
  margin-right: 2px;
`;
const Tab = styled.div<{ $on?: boolean }>`
  padding: 0 13px;
  font-size: 13px;
  display: flex;
  align-items: center;
  color: ${p => (p.$on ? '#1e88c8' : '#222')};
  background: ${p => (p.$on ? '#fff' : 'transparent')};
  border-top: ${p => (p.$on ? '1px solid #ddd' : 'none')};
`;
const TabTools = styled.div`
  margin-left: auto;
  display: flex;
  align-items: center;
  padding-right: 6px;
`;
const Search = styled.div`
  width: 125px;
  height: 20px;
  background: #fff;
  border: 1px solid #a8a8a8;
  display: flex;
  align-items: center;
  justify-content: space-between;
  color: #9a9a9a;
  font-size: 11px;
  padding: 0 1px 0 2px;
  margin-right: 14px;
`;
const TabIcons = styled.div`
  width: 130px;
  display: flex;
  align-items: center;
  justify-content: space-between;
`;

/* ribbon */
const Ribbon = styled.div`
  height: 95px;
  display: flex;
  background: #fff;
  border-bottom: 1px solid #dcdcdc;
`;
const Group = styled.div<{ $w: number; $last?: boolean }>`
  width: ${p => p.$w}px;
  flex: none;
  display: flex;
  flex-direction: column;
  position: relative;
  &::after {
    content: '';
    display: ${p => (p.$last ? 'none' : 'block')};
    position: absolute;
    right: 0;
    top: 5px;
    bottom: 4px;
    width: 1px;
    background: #d8d8d8;
  }
`;
const GBody = styled.div<{ $pl?: number }>`
  flex: 1;
  display: flex;
  align-items: flex-start;
  padding-left: ${p => p.$pl ?? 0}px;
  min-height: 0;
`;
const GLabel = styled.div`
  height: 18px;
  padding-bottom: 3px;
  display: flex;
  align-items: center;
  color: #2a95d4;
  font-size: 11px;
  white-space: nowrap;
  overflow: hidden;
`;
const GText = styled.span`
  flex: 1;
  text-align: center;
  overflow: hidden;
`;
const Col = styled.div<{ $w: number; $two?: boolean }>`
  width: ${p => p.$w}px;
  flex: none;
  display: flex;
  flex-direction: column;
  align-items: center;
  padding-top: ${p => (p.$two ? 11 : 3)}px;
  gap: ${p => (p.$two ? 10 : 2)}px;
`;
const PipeCol = styled(Col)`
  padding-top: 8px;
  gap: 8px;
`;
const Cell = styled.div`
  width: 100%;
  height: 20px;
  display: flex;
  align-items: center;
  justify-content: center;
`;
const VLine = styled.div`
  width: 1px;
  height: 18px;
  background: #d4d4d4;
`;
const Big = styled.div<{ $w: number; $pl?: number }>`
  width: ${p => p.$w}px;
  flex: none;
  display: flex;
  flex-direction: column;
  align-items: center;
  padding-top: 6px;
  padding-left: ${p => p.$pl ?? 0}px;
  font-size: 11.2px;
  color: #222;
`;
const BigIcon = styled.div`
  height: 35px;
  display: flex;
  align-items: center;
  justify-content: center;
`;
const BigText = styled.div`
  height: 17px;
  line-height: 16px;
`;
const MoreBox = styled.div`
  width: 36px;
  height: 34px;
  margin-bottom: 1px;
  border: 1px solid #ececec;
  border-radius: 3px;
  display: flex;
  align-items: center;
  justify-content: center;
`;
const SketchBox = styled.div`
  width: 33px;
  height: 66px;
  margin-top: 5px;
  border: 1px solid #d6d6d6;
  display: flex;
  flex-direction: column;
  align-items: center;
  justify-content: space-around;
  flex: none;
`;
const DimWrap = styled.div`
  display: flex;
  flex-direction: column;
  align-items: center;
  font-family: "Liberation Sans", sans-serif;
  white-space: nowrap;
`;
const DimTop = styled.span<{ $c?: string; $box?: boolean }>`
  font-size: 9.5px;
  line-height: 9px;
  color: ${p => p.$c ?? '#222'};
  ${p => (p.$box ? 'border: 1.5px solid #b83030; padding: 0 1px; line-height: 9px; font-size: 9px;' : '')}
`;
const DimSub = styled.span<{ $c?: string; $tight?: boolean }>`
  font-size: ${p => (p.$tight ? 6 : 7)}px;
  line-height: ${p => (p.$tight ? 5 : 6)}px;
  font-weight: bold;
  color: ${p => p.$c ?? '#b84040'};
`;
const DimRow = styled.div`
  display: flex;
  align-items: center;
  height: 20px;
`;
const DimCell = styled.div`
  width: 23px;
  flex: none;
  display: flex;
  align-items: center;
  justify-content: center;
`;
const DimRows = styled.div`
  display: flex;
  flex-direction: column;
  gap: 2px;
  padding: 3px 0 0 4px;
`;

const Dim = ({ t, b = [], c, sc, box }: { t: string; b?: string[]; c?: string; sc?: string; box?: boolean }) => (
  <DimWrap>
    <DimTop $c={c} $box={box}>{t}</DimTop>
    {b.map((x, i) => <DimSub key={i} $c={sc} $tight={b.length > 1}>{x}</DimSub>)}
  </DimWrap>
);

/* toolbar */
const ToolBar = styled.div`
  height: 31px;
  display: flex;
  align-items: center;
  background: #fff;
  border-bottom: 2px solid #b4b4b4;
  padding-left: 9px;
`;
const MenuBtn = styled.div`
  width: 77px;
  display: flex;
  align-items: center;
  gap: 2px;
  font-size: 11px;
  flex: none;
`;
const TSep = styled.div<{ $ml?: number; $mr?: number }>`
  width: 1px;
  height: 22px;
  background: #d0d0d0;
  flex: none;
  margin-left: ${p => p.$ml ?? 0}px;
  margin-right: ${p => p.$mr ?? 0}px;
`;
const Select = styled.div<{ $w: number; $mr?: number }>`
  width: ${p => p.$w}px;
  height: 19px;
  margin-right: ${p => p.$mr ?? 0}px;
  flex: none;
  border: 1px solid #a8a8a8;
  display: flex;
  align-items: center;
  justify-content: space-between;
  padding: 0 4px 0 2px;
  font-size: 11px;
  color: #222;
`;
const Tool = styled.div<{ $w?: number; $on?: boolean }>`
  width: ${p => p.$w ?? 25}px;
  height: 23px;
  flex: none;
  display: flex;
  align-items: center;
  justify-content: center;
  position: relative;
  &::before {
    content: '';
    display: ${p => (p.$on ? 'block' : 'none')};
    position: absolute;
    inset: 0 1px;
    background: #c3d4d1;
    border: 1px solid #a4bcb8;
  }
  & > * {
    position: relative;
  }
`;
const ToolEnd = styled.div`
  margin-left: auto;
  padding-right: 4px;
`;

/* main */
const Main = styled.div`
  height: 500px;
  display: flex;
  flex: none;
`;
const Rail = styled.div`
  width: 33px;
  flex: none;
  background: #dcdcdc;
  border-right: 1px solid #a8a8a8;
  display: flex;
  flex-direction: column;
  align-items: center;
`;
const RailItem = styled.div<{ $h: number; $on?: boolean; $dim?: boolean }>`
  height: ${p => p.$h}px;
  width: ${p => (p.$on ? 30 : 32)}px;
  flex: none;
  display: flex;
  align-items: center;
  justify-content: center;
  padding-right: 2px;
  opacity: ${p => (p.$dim ? 0.38 : 1)};
  ${p => (p.$on ? 'align-self: flex-end; margin-right: -1px; background: #fff; border: 1px solid #a8a8a8; border-right: none; border-radius: 2px 0 0 2px;' : '')}
`;
const Panel = styled.div`
  width: 330px;
  flex: none;
  display: flex;
  flex-direction: column;
  padding: 0 10px 7px 5px;
  background: #fff;
`;
const PanelHead = styled.div`
  height: 28px;
  display: flex;
  align-items: center;
  justify-content: space-between;
  padding: 2px 6px 0 4px;
  font-size: 12px;
  color: #333;
`;
const MaxBox = styled.div`
  width: 12px;
  height: 11px;
  border: 1px solid #222;
  border-top-width: 2px;
`;
const TreeBox = styled.div`
  flex: 1;
  display: flex;
  flex-direction: column;
  border: 1px solid #dcdcdc;
  padding: 1px 1px 0;
  min-height: 0;
`;
const Head = styled.div`
  height: 21px;
  flex: none;
  display: flex;
  background: #f0f0f0;
  border-bottom: 1px solid #d8d8d8;
  overflow: hidden;
`;
const HeadCell = styled.div<{ $w: number; $end?: boolean }>`
  width: ${p => p.$w}px;
  flex: none;
  border-right: ${p => (p.$end ? 'none' : '1px solid #d8d8d8')};
  display: flex;
  align-items: center;
  padding-left: ${p => (p.$end ? 5 : 6)}px;
  color: #444;
  font-size: 12px;
  white-space: nowrap;
  overflow: hidden;
`;
const SortUp = styled.span`
  margin-left: 17px;
  border-left: 5px solid transparent;
  border-right: 5px solid transparent;
  border-bottom: 5px solid #222;
`;
const TreeMid = styled.div`
  height: 420px;
  flex: none;
  display: flex;
`;
const Rows = styled.div`
  width: 297px;
  flex: none;
  display: flex;
  flex-direction: column;
`;
const Row = styled.div<{ $alt?: boolean; $h?: number }>`
  height: ${p => p.$h ?? 20}px;
  flex: none;
  display: flex;
  background: ${p => (p.$alt ? '#fafafa' : '#fff')};
  border-bottom: 1px solid #ececec;
`;
const NameCell = styled.div`
  width: 200px;
  flex: none;
  display: flex;
  align-items: center;
  padding-left: 28px;
  border-right: 1px solid #ececec;
`;
const Guide = styled.div<{ $end?: boolean }>`
  width: 12px;
  align-self: flex-start;
  height: ${p => (p.$end ? '10px' : '20px')};
  border-left: 1px dotted #8a8a8a;
  position: relative;
  flex: none;
  &::after {
    content: '';
    position: absolute;
    left: 1px;
    width: 9px;
    top: 10px;
    border-top: 1px dotted #8a8a8a;
  }
`;
const Check = styled.div`
  width: 13px;
  height: 13px;
  border: 1px solid #111;
  background: #fff;
  margin-right: 1px;
  flex: none;
  display: flex;
  align-items: center;
  justify-content: center;
`;
const RowText = styled.span<{ $tone?: string }>`
  margin-left: 2px;
  font-size: 12px;
  white-space: nowrap;
  color: ${p => (p.$tone === 'gray' ? '#aaa' : p.$tone === 'dark' ? '#222' : p.$tone === 'bold' ? '#999' : '#484848')};
`;
const Strong = styled.b`
  font-weight: 700;
`;
const LatestCell = styled.div`
  flex: 1;
  display: flex;
  align-items: center;
  padding-left: 6px;
`;
const VScroll = styled.div`
  width: 16px;
  flex: none;
  background: #f4f4f4;
  display: flex;
  flex-direction: column;
  align-items: center;
`;
const ScrollEnd = styled.div`
  height: 18px;
  width: 100%;
  flex: none;
  display: flex;
  align-items: center;
  justify-content: center;
`;
const VTrack = styled.div`
  flex: 1;
  width: 100%;
  padding: 197px 1px 0 0;
`;
const VThumb = styled.div`
  height: 186px;
  background: linear-gradient(90deg, #d8d8d8, #c8c8c8 60%, #b8b8b8);
  border: 1px solid #9a9a9a;
  border-radius: 2px;
  display: flex;
  align-items: center;
  justify-content: center;
`;
const Grip = styled.div<{ $v?: boolean }>`
  ${p => (p.$v
    ? 'width: 7px; height: 8px; border-left: 1px solid #444; border-right: 1px solid #444; background: linear-gradient(90deg, transparent 2px, #444 2px, #444 3px, transparent 3px);'
    : 'width: 7px; height: 7px; background: repeating-linear-gradient(0deg, #444 0 1px, transparent 1px 2.5px);')}
`;
const HScroll = styled.div`
  height: 17px;
  width: 296px;
  flex: none;
  margin-top: 1px;
  background: #f4f4f4;
  display: flex;
  align-items: center;
`;
const HEnd = styled.div`
  width: 18px;
  flex: none;
  display: flex;
  justify-content: center;
`;
const HThumb = styled.div`
  width: 190px;
  height: 15px;
  background: linear-gradient(#ececec, #c6c6c6 60%, #b8b8b8);
  border: 1px solid #9a9a9a;
  border-radius: 2px;
  display: flex;
  align-items: center;
  justify-content: center;
`;
const HGap = styled.div`
  flex: 1;
`;
const TriL = styled.span`
  border-top: 4px solid transparent;
  border-bottom: 4px solid transparent;
  border-right: 4px solid #444;
`;
const TriR = styled(TriL)`
  border-right: none;
  border-left: 4px solid #444;
`;
const TriU = styled.span`
  border-left: 4px solid transparent;
  border-right: 4px solid transparent;
  border-bottom: 4px solid #444;
`;
const TriD = styled.span`
  border-left: 4px solid transparent;
  border-right: 4px solid transparent;
  border-top: 4px solid #444;
`;
const PanelFoot = styled.div`
  height: 4px;
  flex: none;
  background: #dcdcdc;
  border: 1px solid #b8b8b8;
`;
const Viewport = styled.div`
  flex: 1;
  border: 2px solid #ec7a1e;
  border-right: none;
  background: linear-gradient(#93b8d6 0%, #b5cde0 28%, #d2dee7 52%, #e4e4e4 76%, #e4e4e4 100%);
  overflow: hidden;
`;
const Stage = styled.svg`
  display: block;
  width: 1000px;
  height: 496px;
`;

/* bottom */
const Status = styled.div`
  height: 26px;
  flex: none;
  display: flex;
  align-items: center;
  padding: 0 4px 0 10px;
  gap: 6px;
`;
const Status2 = styled.div`
  height: 22px;
  flex: none;
  border-top: 1px solid #b4b4b4;
  display: flex;
  align-items: center;
  justify-content: flex-end;
  gap: 3px;
  padding-right: 55px;
`;
const Taskbar = styled.div`
  height: 39px;
  flex: none;
  display: flex;
  align-items: center;
  border-top: 1px solid #2e2a28;
  background:
    linear-gradient(rgba(255, 255, 255, .22), rgba(255, 255, 255, .05) 5px, rgba(255, 255, 255, 0) 12px),
    linear-gradient(90deg, #7d6054 0, #7d6054 60px, #8c6c58 190px, #836957 400px, #876d5f 480px, #7b6252 640px, #75604f 720px, #6a5444 735px, #6a5a4e 745px, #4b3a2c 762px, #7a6456 785px, #4d3a2c 810px, #6a5444 830px, #4a3628 850px, #6a5648 880px, #5e4a3a 940px, #4f3826 1010px, #45301f 1060px, #3a2a20 1140px, #33251c 1280px, #2c2119 1365px);
`;
const Start = styled.div`
  width: 60px;
  flex: none;
  display: flex;
  justify-content: flex-start;
  padding-left: 8px;
`;
const TaskBtn = styled.div`
  width: 59px;
  height: 38px;
  flex: none;
  margin-right: 3px;
  border: 1px solid rgba(255, 255, 255, .35);
  border-radius: 3px;
  background: linear-gradient(rgba(255, 255, 255, .42), rgba(255, 255, 255, .12) 50%, rgba(255, 255, 255, .18));
  box-shadow: inset 0 0 0 1px rgba(0, 0, 0, .15);
  display: flex;
  align-items: center;
  justify-content: center;
`;
const Tray = styled.div`
  margin-left: auto;
  display: flex;
  align-items: center;
  height: 100%;
`;
const TrayCell = styled.div<{ $w: number }>`
  width: ${p => p.$w}px;
  flex: none;
  display: flex;
  flex-direction: column;
  align-items: center;
  justify-content: center;
  gap: 2px;
`;
const Clock = styled.div`
  width: 80px;
  flex: none;
  text-align: center;
  color: #fff;
  font-size: 13px;
  line-height: 18px;
  font-family: "Liberation Sans", sans-serif;
  padding-left: 2px;
`;
const ShowDesk = styled.div`
  width: 13px;
  height: 100%;
  border: 1px solid rgba(255, 255, 255, .3);
  background: linear-gradient(rgba(255, 255, 255, .18), rgba(255, 255, 255, .05));
  flex: none;
`;
const Watermark = styled.svg`
  position: absolute;
  left: 1083px;
  top: 672px;
`;
const WatermarkText = styled.div`
  position: absolute;
  left: 1163px;
  top: 728px;
  font: bold 15px "Liberation Sans", sans-serif;
  letter-spacing: 2.2px;
  color: rgba(205, 205, 205, .48);
  white-space: nowrap;
`;

const rows = [
  ...Array.from({ length: 13 }, (_, i) => ({ n: 17 + i, label: '体', icon: 'body', on: true, tone: 'normal' })),
  { n: 30, label: '体', icon: 'body', on: true, tone: 'gray' },
  { n: 31, label: '偏置曲线', icon: 'offset', on: false, tone: 'gray' },
  { n: 32, label: '拉伸', icon: 'extrude', on: false, tone: 'gray' },
  { n: 33, label: '拉伸', icon: 'extrude', on: false, tone: 'gray' },
  { n: 34, label: '有界平面', icon: 'plane', on: true, tone: 'dark' },
  { n: 36, label: '偏置曲线', icon: 'offset', on: false, tone: 'gray' },
  { n: 37, label: '拉伸', icon: 'extrude', on: false, tone: 'bold' },
];

type T = { k?: string; w?: number; on?: boolean; fade?: boolean; c?: 'caret' | 'sep'; ml?: number; mr?: number };
const tools: T[] = [
  { k: 'selA', fade: true, w: 25 }, { k: 'selB', fade: true, w: 30 }, { k: 'selFilter', w: 20 }, { c: 'caret', w: 12 },
  { k: 'selC', fade: true, w: 25 }, { k: 'selD', fade: true, w: 26 }, { k: 'dashRect', w: 22 }, { c: 'caret', w: 15 },
  { k: 'plate' }, { k: 'cubeSel', on: true }, { k: 'snapDots', on: true }, { k: 'lineEnd', on: true }, { k: 'lineMid', on: true },
  { k: 'scurve' }, { k: 'poly', on: true }, { k: 'arcC' }, { k: 'circC', on: true }, { k: 'circP' }, { k: 'cross', on: true },
  { k: 'lineMid', on: true }, { k: 'surfPt' }, { k: 'gridPt' },
  { c: 'sep', ml: 4, mr: 8 },
  { k: 'zoomFit' }, { k: 'pan' }, { k: 'rotate', on: true }, { k: 'view' }, { c: 'caret', w: 11 }, { k: 'shade', w: 26 }, { c: 'caret', w: 11 },
  { k: 'blockB', w: 25 }, { c: 'caret', w: 11 }, { k: 'triColor', w: 23 }, { c: 'caret', w: 13 },
  { c: 'sep', ml: 7, mr: 4 },
  { k: 'asmA', fade: true }, { k: 'asmB' }, { k: 'asmC' }, { k: 'asmD' }, { k: 'asmE', fade: true }, { k: 'wedge' },
  { c: 'sep', ml: 4, mr: 0 },
];

const I3 = ({ items, w, fade }: { items: (string | null)[]; w: number; fade?: boolean }) => (
  <Col $w={w}>{items.map((k, i) => <Cell key={i}>{k && <Ico k={k} fade={fade} />}</Cell>)}</Col>
);
const I2 = ({ items, w }: { items: (string | null)[]; w: number }) => (
  <Col $w={w} $two>{items.map((k, i) => <Cell key={i}>{k && <Ico k={k} />}</Cell>)}</Col>
);
const Ar3 = ({ w, on }: { w: number; on: boolean[] }) => (
  <Col $w={w}>{on.map((o, i) => <Cell key={i}>{o && <Caret />}</Cell>)}</Col>
);
const Sep2 = ({ on = [true, true] }: { on?: boolean[] }) => (
  <Col $w={1} $two>{on.map((o, i) => <Cell key={i}>{o && <VLine />}</Cell>)}</Col>
);
const Label = ({ t, w = 12 }: { t: string; w?: number }) => (
  <GLabel><GText>{t}</GText><Caret $w={w} /></GLabel>
);
const BigBtn = ({ w, k, t, s = 34, arrow, pl }: { w: number; k: string; t: string; s?: number; arrow?: boolean; pl?: number }) => (
  <Big $w={w} $pl={pl}><BigIcon><Ico k={k} s={s} /></BigIcon><BigText>{t}</BigText>{arrow && <Caret />}</Big>
);
const More = ({ k, t = '更多' }: { k: string; t?: string }) => (
  <Big $w={36}><MoreBox><Ico k={k} s={22} /></MoreBox><BigText>{t}</BigText><Caret /></Big>
);

export default function App() {
  return (
    <Page>
      <Global />
      <TitleBar>
        <QuickBar>
          <Logo>NX</Logo>
          <QSep />
          <QBtn $w={32}><Ico k="save" s={17} /></QBtn>
          <QSep />
          <QBtn $w={26}><Ico k="undo" s={17} /></QBtn>
          <Caret />
          <QBtn $w={24}><Ico k="redo" s={17} /></QBtn>
          <QSep />
          <QBtn $w={28}><Ico k="cut" s={17} /></QBtn>
          <QBtn $w={18}><Ico k="copy" s={16} /></QBtn>
          <QBtn $w={28}><Ico k="paste" s={17} /></QBtn>
          <QSep />
          <QBtn $w={26}><Ico k="snap" s={18} /></QBtn>
          <Caret />
          <QBtn $w={2} />
          <QSep />
          <QBtn $w={28}><Ico k="pen" s={18} /></QBtn>
          <QSep />
          <QBtn $w={26}><Ico k="win" s={16} /></QBtn>
          <WinLabel>窗口</WinLabel>
          <Caret />
          <LineCaret $ml={1} />
        </QuickBar>
        <WinTitle>NX 10 - 建模 - [E2.prt （ 修改的 ） ]</WinTitle>
        <Siemens>SIEMENS</Siemens>
        <WinBtns>
          <MinGlyph />
          <RestoreGlyph />
          <CloseGlyph />
        </WinBtns>
      </TitleBar>

      <TabBar>
        <FileTab>文件(F)</FileTab>
        <Tab $on>主页</Tab>
        {['分析', '装配', '应用模块', '曲线', '渲染', 'PMI', '焊接助理', '可视报告', '工具', '视图'].map(t => <Tab key={t}>{t}</Tab>)}
        <TabTools>
          <Search>查找命令<Ico k="magnify" s={16} /></Search>
          <TabIcons>
            <Ico k="frameWin" s={16} />
            <svg width="14" height="10" viewBox="0 0 14 10"><path d="M1 8l6-6 6 6-2 1-4-4-4 4z" fill="#fff" stroke="#222" /></svg>
            <svg width="15" height="15" viewBox="0 0 15 15"><circle cx="7.5" cy="7.5" r="7" fill="#2a6ee0" /><text x="7.5" y="11.5" fontSize="11" fontWeight="bold" fill="#fff" textAnchor="middle" fontFamily="Liberation Sans">?</text></svg>
            <MinGlyph $c="#222" />
            <RestoreGlyph c="#222" />
            <CloseGlyph c="#222" />
          </TabIcons>
        </TabTools>
      </TabBar>

      <Ribbon>
        <Group $w={112}>
          <GBody $pl={12}>
            <BigBtn w={34} k="sketch" t="草图" s={32} />
            <Col $w={11} />
            <SketchBox><Ico k="sketchWave" s={24} /><Ico k="sketchRect" s={24} /></SketchBox>
            <Col $w={16}>
              <Cell><Caret $c="#bbb" style={{ transform: 'rotate(180deg)' }} /></Cell>
              <Cell><Caret /></Cell>
              <Cell><LineCaret /></Cell>
            </Col>
          </GBody>
          <Label t="直接草图" w={15} />
        </Group>
        <Group $w={197}>
          <GBody $pl={10}>
            <I3 w={20} items={['sheet', 'extrude', 'hole']} />
            <Ar3 w={16} on={[true, true, false]} />
            <I3 w={20} items={['bumps', 'bool', 'pocket']} />
            <Ar3 w={18} on={[false, true, false]} />
            <BigBtn w={38} k="blend" t="边倒圆" arrow />
            <I3 w={28} items={['chamfer', 'cubeDash', 'cone']} />
            <Col $w={6} />
            <More k="more1" />
          </GBody>
          <Label t="特征" w={15} />
        </Group>
        <Group $w={49}>
          <GBody><BigBtn w={49} k="sphere" t="球" s={36} pl={2} /></GBody>
        </Group>
        <Group $w={149}>
          <GBody $pl={8}>
            <I3 w={24} items={['syncA', 'syncC', 'syncE']} />
            <I3 w={24} items={['syncB', 'syncD', 'syncF']} />
            <Col $w={1} />
            <BigBtn w={44} k="sew" t="缝合" />
            <Col $w={6} />
            <More k="morph" />
          </GBody>
          <Label t="同步建模" w={15} />
        </Group>
        <Group $w={103}>
          <GBody $pl={3}>
            <I2 w={24} items={['stdA', 'okCube']} />
            <I2 w={24} items={['stack', 'okTool']} />
            <I2 w={24} items={['stackList', 'okBox']} />
            <Sep2 />
            <I2 w={26} items={['tag', 'kit']} />
          </GBody>
          <Label t="标准化工具 - G..." w={17} />
        </Group>
        <Group $w={53}>
          <GBody $pl={4}>
            <I2 w={24} items={['gearA', 'hand']} />
            <I2 w={23} items={['gearB', null]} />
          </GBody>
          <Label t="齿轮..." w={15} />
        </Group>
        <Group $w={57}>
          <GBody $pl={4}>
            <I2 w={22} items={['spring', 'ring']} />
            <Sep2 on={[false, true]} />
            <I2 w={26} items={['coil', 'clamp']} />
          </GBody>
          <Label t="弹簧..." w={15} />
        </Group>
        <Group $w={53}>
          <GBody $pl={4}>
            <I2 w={23} items={['machOk', 'gridPin']} />
            <I2 w={22} items={['machList', 'axis']} />
          </GBody>
          <Label t="加工..." w={15} />
        </Group>
        <Group $w={74}>
          <GBody $pl={3}>
            <I3 w={23} items={['tri', 'folderOO', 'bino']} />
            <I3 w={23} items={['tableTri', 'noteBox', null]} />
            <I3 w={23} items={['folderPlus', 'broomDim', null]} />
          </GBody>
          <Label t="建模工具..." w={15} />
        </Group>
        <Group $w={30}>
          <GBody $pl={5}><I2 w={20} items={['goldCubes', 'goldCubes']} /></GBody>
          <Label t="?.." />
        </Group>
        <Group $w={212}>
          <GBody>
            <DimRows>
              <DimRow><DimCell><Ico k="dimStep" /></DimCell></DimRow>
              <DimRow>
                <DimCell><Dim t="1.00" /></DimCell>
                <DimCell><Dim t="1.00" b={['±.05']} /></DimCell>
                <DimCell><Dim t="1.00" b={['+.05', '-.02']} /></DimCell>
                <DimCell><Dim t="1.00" b={['+.05', '-.00']} /></DimCell>
                <DimCell><Dim t="1.00" b={['+.00', '-.02']} /></DimCell>
                <DimCell><Dim t="1.00" box /></DimCell>
                <DimCell><Dim t="(1.00)" c="#8a2020" /></DimCell>
                <DimCell><Dim t="10H7" c="#3c3cc0" /></DimCell>
                <DimCell><Dim t="10H7" c="#3c3cc0" b={['[0.01', '[0']} sc="#3c3cc0" /></DimCell>
              </DimRow>
              <DimRow>
                <DimCell><Dim t="10H7" c="#3c3cc0" b={['[0.015', '[0']} sc="#3c3cc0" /></DimCell>
                <DimCell><Dim t="10" c="#3c3cc0" b={['[0.015', '[0']} sc="#3c3cc0" /></DimCell>
                <VLine />
                <DimCell><Ico k="dimSlash" /></DimCell>
                <DimCell><Ico k="dimRad" /></DimCell>
                <VLine />
                <DimCell><Ico k="dia1" /></DimCell>
                <DimCell><Ico k="dia2" /></DimCell>
                <DimCell><Ico k="backArrow" /></DimCell>
                <DimCell><Ico k="palette" s={21} /></DimCell>
              </DimRow>
            </DimRows>
          </GBody>
          <Label t="尺寸快速格式化工具 - GC工具箱" w={24} />
        </Group>
        <Group $w={66}>
          <GBody>
            <PipeCol $w={44}>
              <Ico k="bigPipeBox" s={26} />
              <Ico k="pipe" s={26} />
            </PipeCol>
            <I3 w={16} items={['smallDashCube', 'flagA', 'flagB']} />
          </GBody>
          <GLabel />
        </Group>
        <Group $w={43}>
          <GBody><BigBtn w={43} k="surface" t="曲面" arrow /></GBody>
          <GLabel />
        </Group>
        <Group $w={76}>
          <GBody $pl={11}>
            <I3 w={20} items={['asmGhost', 'asmAdd', 'asmPlane']} />
            <Ar3 w={16} on={[false, true, false]} />
            <I3 w={22} items={['mirrorAsm', 'asmMove', 'asmRow']} />
          </GBody>
          <Label t="装配" w={15} />
        </Group>
        <Group $w={58}>
          <GBody $pl={7}>
            <I3 w={22} items={['asmCut', 'planeCube', 'framePart']} />
            <Col $w={3} />
            <I3 w={22} items={['ghostPart', 'redPlaneCube', 'boxesMove']} />
          </GBody>
          <GLabel />
        </Group>
        <Group $w={33} $last>
          <GBody />
          <GLabel><GText /><Caret $w={15} /></GLabel>
        </Group>
      </Ribbon>

      <ToolBar>
        <MenuBtn><Ico k="menuI" s={18} />菜单(M)<Caret $w={10} /></MenuBtn>
        <TSep $mr={13} />
        <Select $w={132} $mr={9}>没有选择过滤器<Caret /></Select>
        <Select $w={140}>整个装配<Caret /></Select>
        {tools.map((t, i) => {
          if (t.c === 'sep') return <TSep key={i} $ml={t.ml} $mr={t.mr} />;
          if (t.c === 'caret') return <Tool key={i} $w={t.w}><Caret /></Tool>;
          return <Tool key={i} $w={t.w} $on={t.on}><Ico k={t.k!} s={18} fade={t.fade} /></Tool>;
        })}
        <ToolEnd><Caret /></ToolEnd>
      </ToolBar>

      <Main>
        <Rail>
          <RailItem $h={26}><Ico k="gear" s={18} /></RailItem>
          <RailItem $h={17} />
          <RailItem $h={40}><Ico k="railAsm" s={23} /></RailItem>
          <RailItem $h={42}><Ico k="railCon" s={23} /></RailItem>
          <RailItem $h={44} $on><Ico k="railPart" s={23} /></RailItem>
          <RailItem $h={40}><Ico k="railBooks" s={25} /></RailItem>
          <RailItem $h={68}><Ico k="railInfo" s={25} /></RailItem>
          <RailItem $h={40}><Ico k="railPage" s={21} /></RailItem>
          <RailItem $h={14} />
          <RailItem $h={40}><Ico k="railClock" s={23} /></RailItem>
          <RailItem $h={46}><Ico k="railColor" s={24} /></RailItem>
          <RailItem $h={16}><Ico k="railCurve" s={27} /></RailItem>
          <RailItem $h={16} $dim><LineCaret style={{ transform: 'rotate(180deg)' }} /></RailItem>
          <RailItem $h={16} $dim><TriU /></RailItem>
          <RailItem $h={16}><TriD /></RailItem>
          <RailItem $h={16}><LineCaret /></RailItem>
        </Rail>

        <Panel>
          <PanelHead>部件导航器<MaxBox /></PanelHead>
          <TreeBox>
            <Head>
              <HeadCell $w={200}>名称<SortUp /></HeadCell>
              <HeadCell $w={100}>最新</HeadCell>
              <HeadCell $w={14} $end>附</HeadCell>
            </Head>
            <TreeMid>
              <Rows>
                {rows.map((r, i) => (
                  <Row key={r.n} $alt={i % 2 === 1}>
                    <NameCell>
                      <Guide $end={i === rows.length - 1} />
                      <Check>{r.on && <svg width="13" height="11" viewBox="0 0 12 10">{tick(0, 0)}</svg>}</Check>
                      <Ico k={r.icon} s={18} />
                      <RowText $tone={r.tone}>{r.label} {r.tone === 'bold' ? <>(<Strong>37</Strong>)</> : `(${r.n})`}</RowText>
                    </NameCell>
                    <LatestCell><svg width="13" height="12" viewBox="0 0 12 10">{tick(0, 0)}</svg></LatestCell>
                  </Row>
                ))}
                <Row $h={20}><NameCell /><LatestCell /></Row>
              </Rows>
              <VScroll>
                <ScrollEnd><TriU /></ScrollEnd>
                <VTrack><VThumb><Grip /></VThumb></VTrack>
                <ScrollEnd><TriD /></ScrollEnd>
              </VScroll>
            </TreeMid>
            <HScroll>
              <HEnd><TriL /></HEnd>
              <HThumb><Grip $v /></HThumb>
              <HGap />
              <HEnd><TriR /></HEnd>
            </HScroll>
          </TreeBox>
          <PanelFoot />
        </Panel>

        <Viewport>
          <Stage viewBox="365 182 1000 496">
            <g transform="translate(640 240) scale(.33333)">
              <path d="M540 47Q675 224 910 265Q938 488 1075 680" fill="none" stroke="#3cf23c" strokeWidth="13" />
              <path d="M185 153C220 158 260 161 300 161" fill="none" stroke="#3cf23c" strokeWidth="9" />
              <path d="M540 47Q675 224 910 265Q938 488 1075 680Q920 798 945 1045Q713 1013 590 1150Q420 960 220 930Q130 620 55 518Q180 384 185 155C290 170 460 170 540 47Z" fill="#1d881d" />
              <path d="M935 895Q930 970 945 1045L936 1048Q920 970 935 895Z" fill="#2fb52f" />
              <path d="M1075 680Q985 750 950 870Q972 770 1068 686Z" fill="#187518" />
              <polygon points="190,320 275,265 540,190 810,350 940,665 860,718 735,405 458,243 197,318" fill="#38f83c" />
              <polygon points="275,265 540,190 458,243 197,318" fill="#2cf02e" />
              <polygon points="540,190 810,350 735,405 458,243" fill="#42fb44" />
              <polygon points="860,718 940,665 845,935 762,993" fill="#1f9c1f" />
              <polygon points="188,320 94,590 100,597 197,318" fill="#3cf23c" />
              <polygon points="197,318 458,243 735,405 858,718 762,993 503,1068 222,905 100,595" fill="#3a5672" />
              <polygon points="920,372 945,350 952,354 925,376" fill="#3cf23c" />
              <polygon points="940,195 949,228 945,338 933,228" fill="#aa2a2a" />
              <polygon points="1032,297 1010,322 955,347 990,315" fill="#1a5fe8" />
              <polygon points="955,352 1040,360 1090,375 1030,373" fill="#2e8a42" />
            </g>
            <text x="957" y="303" fontSize="12" fill="#c83c3c" fontFamily="Liberation Sans">XC</text>
            <text x="968" y="336" fontSize="12" fill="#2a78e8" fontFamily="Liberation Sans">ZC</text>
            <text x="990" y="378" fontSize="12" fill="#3e8a5e" fontFamily="Liberation Sans">YC</text>

            <g fill="none" stroke="#b4bcc4" strokeWidth="1">
              <polygon points="409,613 420,608 432,612 430,630 416,635 409,630" />
              <path d="M409 613l12 4 11-5M421 617l-5 18" />
            </g>
            <path d="M416 627l10-10" stroke="#9cbce8" strokeWidth="1.4" />
            <path d="M407.500 632V606" stroke="#aa2a2a" strokeWidth="2" />
            <polygon points="405,607 410,607 407.500,601" fill="#aa2a2a" />
            <path d="M410 632l24 4" stroke="#1f9a3a" strokeWidth="2" />
            <circle cx="408" cy="632" r="4" fill="#d8d8d8" stroke="#999" />
            <text x="403" y="602" fontSize="10" fill="#c85a5a" fontFamily="Liberation Sans">X</text>
            <text x="435" y="641" fontSize="10" fill="#4a9a6a" fontFamily="Liberation Sans">Y</text>
          </Stage>
        </Viewport>
      </Main>

      <Status>
        <Ico k="statusPal" s={17} />
        <TSep />
        <ToolEnd><Caret /></ToolEnd>
      </Status>
      <Status2>
        <Ico k="flagGray" s={16} />
        <Ico k="frameWin" s={16} />
      </Status2>

      <Taskbar>
        <Start>
          <svg width="38" height="38" viewBox="0 0 38 38">
            <defs>
              <radialGradient id="orb" cx=".5" cy=".35" r=".7"><stop offset="0" stopColor="#9ad0f0" /><stop offset=".55" stopColor="#2a78b8" /><stop offset="1" stopColor="#0e3a68" /></radialGradient>
            </defs>
            <circle cx="19" cy="19" r="18" fill="url(#orb)" stroke="#1a3044" />
            <path d="M9 13c3-2 6-2 9-1l-1.500 7c-3-1-6-1-9 1z" fill="#e8542a" />
            <path d="M19.500 12c3 1 6 1 9-1l-2 7c-3 2-6 2-8.500 1z" fill="#7ab82e" />
            <path d="M7 21c3-2 6-2 9-1l-1.500 7c-3-1-6-1-9 1z" fill="#3a9ae0" />
            <path d="M17.500 20.500c3 1 5.500 1 8.500-1l-2 7c-3 2-5.500 2-8 1z" fill="#f4c020" />
          </svg>
        </Start>
        <TaskBtn>
          <svg width="31" height="31" viewBox="0 0 31 31">
            <circle cx="15.500" cy="15.500" r="14.500" fill="#1e9ae8" />
            <circle cx="15.500" cy="15.500" r="12" fill="#fff" />
            <path d="M7 15.500a8.500 8.500 0 0 1 17 0v2H12c.5 4 6 5 10 2v4c-7 3-15 0-15-8z" fill="#1e9ae8" />
            <rect x="12" y="12.500" width="7.500" height="2" fill="#fff" />
          </svg>
        </TaskBtn>
        <TaskBtn>
          <svg width="34" height="34" viewBox="0 0 34 34">
            <circle cx="17" cy="19" r="12" fill="#2a86e0" />
            <path d="M17 8c6 0 11 5 11 11-3 0-4-3-7-3s-3-5-4-8z" fill="#2e9a58" />
            <ellipse cx="17" cy="22" rx="16" ry="6" transform="rotate(-35 17 22)" fill="none" stroke="#f0a020" strokeWidth="2.400" />
            <polygon points="6,2 22,1 18,16" fill="#d82c44" />
            <polygon points="4,30 12,28 9,33" fill="#f0a020" />
          </svg>
        </TaskBtn>
        <Tray>
          <TrayCell $w={22}>
            <svg width="16" height="12" viewBox="0 0 16 12"><rect x="1" y="3" width="14" height="8" rx="1" fill="#6aa0c0" stroke="#345" strokeWidth=".5" /><path d="M3 5.500h10M3 8h10" stroke="#d0e4f0" strokeDasharray="1 .8" /><path d="M9 3l4-3" stroke="#6aa0c0" strokeWidth="1.200" /></svg>
          </TrayCell>
          <TrayCell $w={22}>
            <svg width="16" height="16" viewBox="0 0 16 16"><circle cx="8" cy="8" r="7.500" fill="#12229a" stroke="#b8c4e0" /><text x="8" y="12" fontSize="11" fontWeight="bold" fill="#fff" textAnchor="middle" fontFamily="Liberation Sans">?</text></svg>
          </TrayCell>
          <TrayCell $w={22}>
            <svg width="9" height="7" viewBox="0 0 9 7"><path d="M3 2V.5h5.500v4H7M.5 2.500H6v4H.5z" fill="none" stroke="#fff" /></svg>
            <Caret $c="#fff" />
          </TrayCell>
          <TrayCell $w={18}><Caret $c="#fff" style={{ transform: 'rotate(180deg)' }} /></TrayCell>
          <TrayCell $w={25}>
            <svg width="16" height="12" viewBox="0 0 16 12"><path d="M1 9h2v2H1zM4 7h2v4H4zM7 5h2v6H7z" fill="#fff" /><path d="M10 3h2v8h-2zM13 1h2v10h-2z" fill="#8a8a7a" /></svg>
          </TrayCell>
          <TrayCell $w={25}>
            <svg width="14" height="14" viewBox="0 0 14 14"><rect x="1" y="2" width="8" height="11" fill="none" stroke="#fff" strokeWidth="1.200" /><path d="M7 1h4v2h2v5h-2l-1 2H7z" fill="#fff" /></svg>
          </TrayCell>
          <TrayCell $w={24}>
            <svg width="13" height="14" viewBox="0 0 13 14"><polygon points="1,5 4,5 8,1 8,13 4,9 1,9" fill="#ddd" /><path d="M10 5c1 1 1 3 0 4" fill="none" stroke="#ccc" /></svg>
          </TrayCell>
          <Clock>21:25<br />2018/7/18</Clock>
          <ShowDesk />
        </Tray>
      </Taskbar>

      <Watermark width="72" height="86" viewBox="0 0 72 86">
        <polygon points="36,0 71,21 71,63 36,84 1,63 1,21" fill="#43aeea" opacity=".5" />
        <polygon points="36,0 71,21 52,16 36,14" fill="#d8f0fc" opacity=".75" />
        <polygon points="1,21 36,0 25,14 8,46 1,63" fill="#9fd6f6" opacity=".5" />
        <path d="M1 30C12 8 40 4 60 12M8 56C4 40 12 24 24 20M36 84C20 74 12 60 16 44M71 40C70 60 50 76 30 72M60 12C70 24 66 40 58 50" fill="none" stroke="#fff" strokeWidth="1.200" opacity=".85" />
        <polygon points="36,26 52,35 36,44 20,35" fill="#d7effc" />
        <polygon points="20,35 36,44 36,62 20,53" fill="#b4e2f9" />
        <polygon points="52,35 36,44 36,62 52,53" fill="#7fc9f2" />
      </Watermark>
      <WatermarkText>WWW.3DSJW.COM</WatermarkText>
    </Page>
  );
}
